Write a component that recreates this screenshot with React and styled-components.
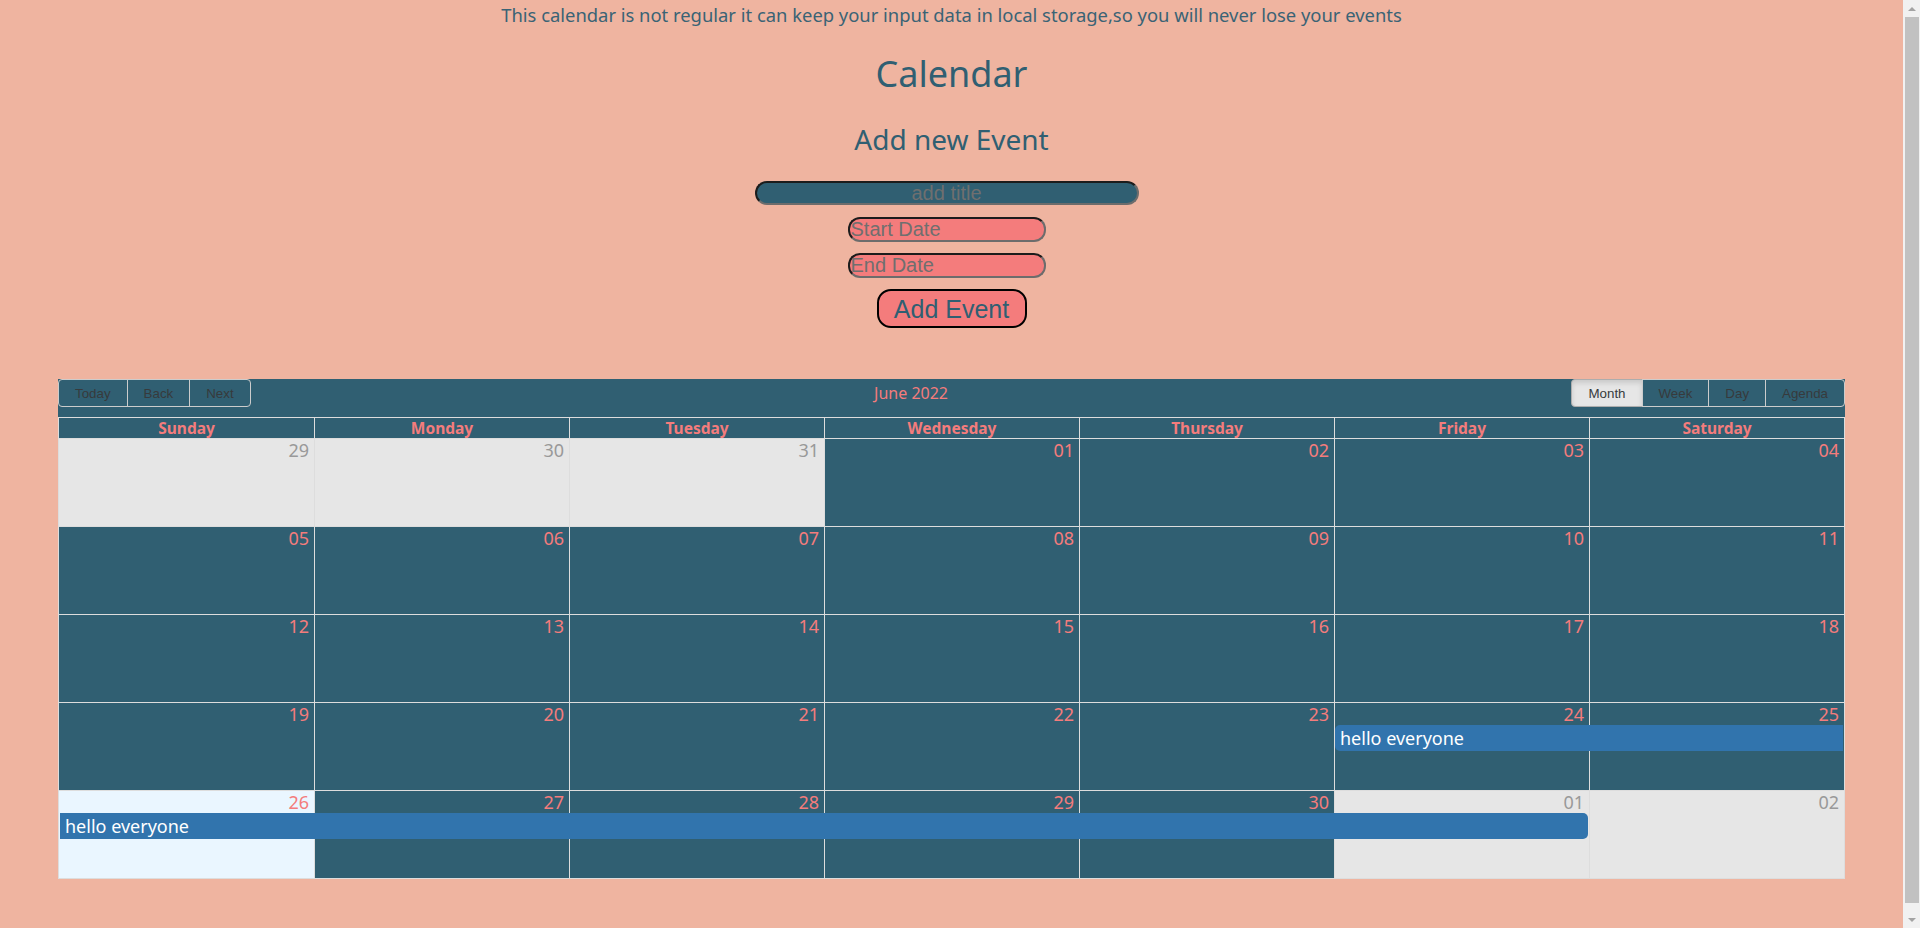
import React from "react";
import styled, { createGlobalStyle } from "styled-components";

const PEACH = "#efb4a0";
const TEAL = "#305f72";
const PINK = "#f47c7c";
const LINE = "#dddddd";

const GlobalStyle = createGlobalStyle`
  html, body {
    margin: 0;
    background: ${PEACH};
  }
  body {
    font-family: "Noto Sans", "Open Sans", sans-serif;
  }
  * { box-sizing: border-box; }
`;

const Page = styled.div`
  margin-right: 17px;
  padding: 4px 0 58px;
  text-align: center;
  color: ${TEAL};
`;

const Note = styled.p`
  margin: 0;
  font-size: 18.4px;
  line-height: 22px;
  color: #3a6375;
`;

const Title = styled.h1`
  margin: 26px 0 0;
  font-size: 36px;
  line-height: 44px;
  font-weight: 400;
`;

const Subtitle = styled.h2`
  margin: 27px 0 0;
  font-size: 28px;
  line-height: 32px;
  font-weight: 400;
`;

const Form = styled.div`
  display: flex;
  flex-direction: column;
  align-items: center;
  margin-top: 26px;
`;

const Field = styled.input`
  display: block;
  height: ${(p) => (p.$kind === "title" ? 24 : 25)}px;
  width: ${(p) => (p.$kind === "title" ? 384 : 198)}px;
  margin: ${(p) => (p.$kind === "title" ? "0 10px 0 0" : `${p.$gap}px 10px 0 0`)};
  padding: 0 1px;
  border-width: 2px;
  border-style: solid;
  border-color: #1c1c1c #6c6c6c #6c6c6c #1c1c1c;
  border-radius: 12px;
  background: ${(p) => (p.$kind === "title" ? TEAL : PINK)};
  text-align: ${(p) => (p.$kind === "title" ? "center" : "left")};
  font-family: "Liberation Sans", Arial, sans-serif;
  font-size: 20px;
  line-height: 20px;
  color: #222;
  outline: none;
  &::placeholder {
    color: #6f6f6f;
  }
`;

const AddButton = styled.button`
  margin-top: 11px;
  width: 150px;
  height: 39px;
  padding: 0;
  border: 2px solid #000;
  border-radius: 14px;
  background: ${PINK};
  color: ${TEAL};
  font-family: "Liberation Sans", Arial, sans-serif;
  font-size: 25px;
  line-height: 28px;
  cursor: pointer;
`;

const CalendarBox = styled.div`
  margin: 51px 58px 0;
  height: 500px;
  background: ${TEAL};
  display: flex;
  flex-direction: column;
  text-align: left;
`;

const Toolbar = styled.div`
  display: flex;
  align-items: center;
  margin-bottom: 10px;
  font-size: 16px;
`;

const ToolGroup = styled.div`
  display: flex;
`;

const ToolButton = styled.button`
  height: 28px;
  padding: 0 16px;
  margin: 0 0 0 ${(p) => (p.$first ? 0 : -1)}px;
  border: 1px solid ${(p) => (p.$active ? "#adadad" : "#cccccc")};
  border-radius: ${(p) =>
    p.$first ? "4px 0 0 4px" : p.$last ? "0 4px 4px 0" : "0"};
  background: ${(p) => (p.$active ? "#e6e6e6" : "transparent")};
  box-shadow: ${(p) => (p.$active ? "inset 0 3px 5px rgba(0,0,0,0.125)" : "none")};
  color: #373a3c;
  font-family: "Liberation Sans", Arial, sans-serif;
  font-size: 13.333px;
  line-height: 15px;
  white-space: nowrap;
  cursor: pointer;
`;

const ToolLabel = styled.span`
  flex: 1;
  padding: 0 10px;
  text-align: center;
  color: ${PINK};
  font-size: 16px;
`;

const MonthView = styled.div`
  flex: 1;
  min-height: 0;
  display: flex;
  flex-direction: column;
  border: 1px solid ${LINE};
`;

const HeaderRow = styled.div`
  display: grid;
  grid-template-columns: repeat(7, minmax(0, 1fr));
  border-bottom: 1px solid ${LINE};
`;

const HeaderCell = styled.div`
  border-left: ${(p) => (p.$first ? "none" : `1px solid ${LINE}`)};
  padding: 0 3px;
  min-height: 20px;
  text-align: center;
  font-weight: 700;
  font-size: 15.5px;
  line-height: 20px;
  color: ${PINK};
  white-space: nowrap;
  overflow: hidden;
`;

const WeekRow = styled.div`
  flex: 1 1 0;
  min-height: 0;
  display: grid;
  grid-template-columns: repeat(7, minmax(0, 1fr));
  grid-template-rows: auto auto 1fr;
  border-top: ${(p) => (p.$first ? "none" : `1px solid ${LINE}`)};
`;

const bgFor = (t) => (t === "off" ? "#e6e6e6" : t === "today" ? "#eaf6ff" : "transparent");

const DayBg = styled.div`
  grid-row: 1 / -1;
  grid-column: ${(p) => p.$col};
  background: ${(p) => bgFor(p.$type)};
  border-left: ${(p) => (p.$col === 1 ? "none" : `1px solid ${LINE}`)};
`;

const DateCell = styled.div`
  grid-row: 1;
  grid-column: ${(p) => p.$col};
  padding-right: 5px;
  text-align: right;
  font-size: 18px;
  line-height: 22px;
  color: ${(p) => (p.$type === "off" ? "#999999" : PINK)};
`;

const Segment = styled.div`
  grid-row: 2;
  grid-column: ${(p) => p.$start} / span ${(p) => p.$span};
  padding: 0 1px 1px 1px;
`;

const EventChip = styled.div`
  background: #3174ad;
  color: #ffffff;
  padding: 2px 5px;
  font-size: 18px;
  line-height: 22px;
  white-space: nowrap;
  overflow: hidden;
  border-radius: ${(p) =>
    `${p.$prior ? 0 : 5}px ${p.$after ? 0 : 5}px ${p.$after ? 0 : 5}px ${p.$prior ? 0 : 5}px`};
`;

/* Window scrollbar drawn over the right edge of the viewport */
const ScrollBar = styled.div`
  position: fixed;
  top: 0;
  right: 0;
  bottom: 0;
  width: 17px;
  background: #f1f1f1;
  display: flex;
  flex-direction: column;
`;

const ScrollArrow = styled.div`
  height: 17px;
  flex: none;
  display: flex;
  align-items: center;
  justify-content: center;
  &::after {
    content: "";
    width: 0;
    height: 0;
    border-left: 4px solid transparent;
    border-right: 4px solid transparent;
    ${(p) =>
      p.$dir === "up"
        ? "border-bottom: 4px solid #a3a3a3;"
        : "border-top: 4px solid #a3a3a3;"}
  }
`;

const ScrollTrack = styled.div`
  flex: 1;
  display: flex;
  flex-direction: column;
  padding: 0 1px 8px 2px;
`;

const ScrollThumb = styled.div`
  flex: 1;
  background: #c1c1c1;
`;

const DAYS = ["Sunday", "Monday", "Tuesday", "Wednesday", "Thursday", "Friday", "Saturday"];

const pad = (n) => String(n).padStart(2, "0");

const WEEKS = [
  {
    days: [
      [29, "off"], [30, "off"], [31, "off"], [1, "in"], [2, "in"], [3, "in"], [4, "in"],
    ],
  },
  { days: [5, 6, 7, 8, 9, 10, 11].map((d) => [d, "in"]) },
  { days: [12, 13, 14, 15, 16, 17, 18].map((d) => [d, "in"]) },
  {
    days: [19, 20, 21, 22, 23, 24, 25].map((d) => [d, "in"]),
    events: [{ title: "hello everyone", start: 6, span: 2, prior: false, after: true }],
  },
  {
    days: [
      [26, "today"], [27, "in"], [28, "in"], [29, "in"], [30, "in"], [1, "off"], [2, "off"],
    ],
    events: [{ title: "hello everyone", start: 1, span: 6, prior: true, after: false }],
  },
];

export default function App() {
  return (
    <>
      <GlobalStyle />
      <Page>
        <Note>
          This calendar is not regular it can keep your input data in local storage,so you will never lose your events
        </Note>
        <Title>Calendar</Title>
        <Subtitle>Add new Event</Subtitle>
        <Form>
          <Field $kind="title" type="text" placeholder="add title" />
          <Field $kind="date" $gap={12} type="text" placeholder="Start Date" />
          <Field $kind="date" $gap={11} type="text" placeholder="End Date" />
          <AddButton>Add Event</AddButton>
        </Form>
        <CalendarBox>
          <Toolbar>
            <ToolGroup>
              <ToolButton $first>Today</ToolButton>
              <ToolButton>Back</ToolButton>
              <ToolButton $last>Next</ToolButton>
            </ToolGroup>
            <ToolLabel>June 2022</ToolLabel>
            <ToolGroup>
              <ToolButton $first $active>Month</ToolButton>
              <ToolButton>Week</ToolButton>
              <ToolButton>Day</ToolButton>
              <ToolButton $last>Agenda</ToolButton>
            </ToolGroup>
          </Toolbar>
          <MonthView>
            <HeaderRow>
              {DAYS.map((d, i) => (
                <HeaderCell key={d} $first={i === 0}>
                  {d}
                </HeaderCell>
              ))}
            </HeaderRow>
            {WEEKS.map((w, wi) => (
              <WeekRow key={wi} $first={wi === 0}>
                {w.days.map(([d, t], i) => (
                  <DayBg key={"bg" + i} $col={i + 1} $type={t} />
                ))}
                {w.days.map(([d, t], i) => (
                  <DateCell key={"d" + i} $col={i + 1} $type={t}>
                    {pad(d)}
                  </DateCell>
                ))}
                {(w.events || []).map((e, ei) => (
                  <Segment key={"e" + ei} $start={e.start} $span={e.span}>
                    <EventChip $prior={e.prior} $after={e.after}>
                      {e.title}
                    </EventChip>
                  </Segment>
                ))}
              </WeekRow>
            ))}
          </MonthView>
        </CalendarBox>
      </Page>
      <ScrollBar aria-hidden="true">
        <ScrollArrow $dir="up" />
        <ScrollTrack>
          <ScrollThumb />
        </ScrollTrack>
        <ScrollArrow $dir="down" />
      </ScrollBar>
    </>
  );
}
